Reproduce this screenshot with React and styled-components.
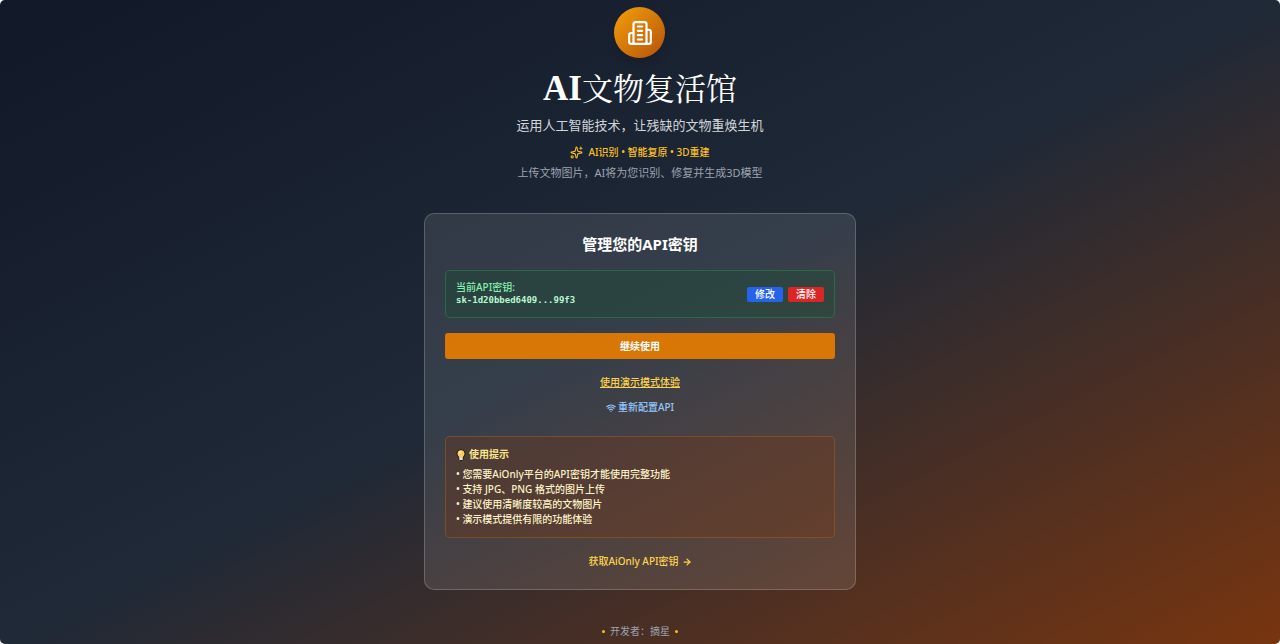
import React from "react";
import styled, { createGlobalStyle } from "styled-components";
import { ArrowRight, Sparkles, Wifi } from "lucide-react";

const tips = [
  "您需要AiOnly平台的API密钥才能使用完整功能",
  "支持 JPG、PNG 格式的图片上传",
  "建议使用清晰度较高的文物图片",
  "演示模式提供有限的功能体验",
];

const MuseumIcon = () => (
  <svg
    width="26"
    height="26"
    viewBox="0 0 24 24"
    fill="none"
    stroke="currentColor"
    strokeWidth="2"
    strokeLinecap="round"
    strokeLinejoin="round"
    aria-hidden="true"
  >
    <path d="M6 22V4a2 2 0 0 1 2-2h8a2 2 0 0 1 2 2v18Z" />
    <path d="M6 12H4a2 2 0 0 0-2 2v6a2 2 0 0 0 2 2h2" />
    <path d="M18 9h2a2 2 0 0 1 2 2v9a2 2 0 0 1-2 2h-2" />
    <path d="M10 6h4M10 10h4M10 14h4M10 18h4" />
  </svg>
);

const BulbIcon = () => (
  <svg width="10" height="12" viewBox="0 0 20 24" aria-hidden="true">
    <path
      d="M10 1a8 8 0 0 0-8 8c0 4 3 6 4 9v3l2 2h4l2-2v-3c1-3 4-5 4-9a8 8 0 0 0-8-8Z"
      fill="#fcc95c"
      stroke="#1c1917"
      strokeWidth="2"
    />
    <path d="M7 17h6v4l-1 1H8l-1-1Z" fill="#e7e5e4" />
    <circle cx="8" cy="7" r="3" fill="#fde6a8" />
  </svg>
);

const App = () => {
  return (
    <Page>
      <GlobalStyle />
      <Header>
        <Logo>
          <MuseumIcon />
        </Logo>
        <Title>
          <TitleLatin>AI</TitleLatin>文物复活馆
        </Title>
        <Subtitle>运用人工智能技术，让残缺的文物重焕生机</Subtitle>
        <Features>
          <Sparkles size={13} />
          <span>AI识别 • 智能复原 • 3D重建</span>
        </Features>
        <Description>上传文物图片，AI将为您识别、修复并生成3D模型</Description>
      </Header>

      <Card>
        <CardTitle>管理您的API密钥</CardTitle>
        <KeyBox>
          <div>
            <KeyLabel>当前API密钥:</KeyLabel>
            <KeyValue>sk-1d20bbed6409...99f3</KeyValue>
          </div>
          <KeyActions>
            <SmallButton type="button" $color="#2563eb">
              修改
            </SmallButton>
            <SmallButton type="button" $color="#dc2626">
              清除
            </SmallButton>
          </KeyActions>
        </KeyBox>
        <MainButton type="button">继续使用</MainButton>
        <Options>
          <TextButton type="button" $color="#fcd34d" $underline>
            使用演示模式体验
          </TextButton>
          <TextButton type="button" $color="#93c5fd">
            <Wifi size={10} strokeWidth={3} />
            重新配置API
          </TextButton>
        </Options>
        <Tips>
          <TipsTitle>
            <BulbIcon />
            使用提示
          </TipsTitle>
          <TipList>
            {tips.map((tip) => (
              <li key={tip}>• {tip}</li>
            ))}
          </TipList>
        </Tips>
        <KeyLink href="#">
          获取AiOnly API密钥
          <ArrowRight size={10} strokeWidth={3} />
        </KeyLink>
      </Card>

      <Footer>
        <Dot />
        <span>开发者：摘星</span>
        <Dot />
      </Footer>
    </Page>
  );
};

export default App;

const GlobalStyle = createGlobalStyle`
  * {
    box-sizing: border-box;
  }
  body {
    margin: 0;
    background: #ffffff;
  }
  h1, h2, h3, p, ul {
    margin: 0;
    padding: 0;
  }
  button {
    font-family: inherit;
    cursor: pointer;
  }
  svg {
    flex-shrink: 0;
  }
`;

const Page = styled.div`
  min-height: 100vh;
  display: flex;
  flex-direction: column;
  align-items: center;
  padding: 7px 16px 5px;
  border-radius: 5px;
  background: linear-gradient(to bottom right, #111827, #1f2937, #78350f);
  color: #ffffff;
  font-family: "Noto Sans", "Noto Sans CJK SC", sans-serif;
  font-size: 10px;
  font-weight: 500;
  line-height: 15px;
`;
const Header = styled.header`
  display: flex;
  flex-direction: column;
  align-items: center;
  text-align: center;
`;
const Logo = styled.div`
  width: 51px;
  height: 51px;
  display: flex;
  align-items: center;
  justify-content: center;
  border-radius: 50%;
  background: linear-gradient(to bottom right, #f59e0b, #b45309);
  box-shadow: 0 6px 10px rgba(0, 0, 0, 0.1);
`;
const Title = styled.h1`
  margin-top: 11px;
  font-family: "Liberation Serif", "Noto Serif CJK SC", "Noto Sans CJK SC", serif;
  font-size: 31px;
  font-weight: 400;
  line-height: 40px;
`;
const TitleLatin = styled.span`
  font-size: 35px;
  font-weight: 700;
`;
const Subtitle = styled.p`
  margin-top: 5px;
  color: #d1d5db;
  font-size: 13px;
  font-weight: 400;
  line-height: 20px;
`;
const Features = styled.div`
  display: flex;
  align-items: center;
  gap: 5px;
  margin-top: 10px;
  color: #fbbf24;
`;
const Description = styled.p`
  margin-top: 4px;
  color: #9ca3af;
  font-size: 11px;
  font-weight: 400;
  line-height: 18px;
`;
const Card = styled.main`
  width: 100%;
  max-width: 432px;
  display: flex;
  flex-direction: column;
  margin-top: 31px;
  padding: 20px;
  border: 1px solid rgba(255, 255, 255, 0.2);
  border-radius: 10px;
  background: rgba(255, 255, 255, 0.1);
`;
const CardTitle = styled.h2`
  font-size: 15px;
  line-height: 20px;
  text-align: center;
`;
const KeyBox = styled.div`
  display: flex;
  align-items: center;
  justify-content: space-between;
  margin-top: 16px;
  padding: 10px;
  border: 1px solid rgba(34, 197, 94, 0.3);
  border-radius: 5px;
  background: rgba(20, 83, 45, 0.3);
`;
const KeyLabel = styled.p`
  color: #86efac;
  line-height: 13px;
`;
const KeyValue = styled.p`
  color: #bbf7d0;
  font-family: "DejaVu Sans Mono", monospace;
  font-size: 9px;
  font-weight: 700;
  line-height: 13px;
`;
const KeyActions = styled.div`
  display: flex;
  gap: 5px;
`;
const SmallButton = styled.button`
  padding: 0 8px;
  border: 0;
  border-radius: 2px;
  background: ${({ $color }) => $color};
  color: #ffffff;
  font-size: 10px;
  font-weight: 500;
  line-height: 15px;
`;
const MainButton = styled.button`
  margin-top: 15px;
  padding: 5px;
  border: 0;
  border-radius: 3px;
  background: #d97706;
  color: #ffffff;
  font-size: 10px;
  font-weight: 700;
  line-height: 16px;
`;
const Options = styled.div`
  display: flex;
  flex-direction: column;
  align-items: center;
  gap: 10px;
  margin-top: 16px;
`;
const TextButton = styled.button`
  display: flex;
  align-items: center;
  gap: 2px;
  padding: 0;
  border: 0;
  background: none;
  color: ${({ $color }) => $color};
  font-size: 10px;
  font-weight: 500;
  line-height: 15px;
  text-decoration: ${({ $underline }) => ($underline ? "underline" : "none")};
`;
const Tips = styled.section`
  margin-top: 21px;
  padding: 10px;
  border: 1px solid rgba(217, 119, 6, 0.3);
  border-radius: 5px;
  background: rgba(120, 53, 15, 0.3);
`;
const TipsTitle = styled.h3`
  display: flex;
  align-items: center;
  gap: 3px;
  color: #fde68a;
  font-size: 10px;
  line-height: 15px;
`;
const TipList = styled.ul`
  margin-top: 5px;
  color: #fef3c7;
  list-style: none;
`;
const KeyLink = styled.a`
  display: flex;
  align-items: center;
  align-self: center;
  gap: 3px;
  margin-top: 16px;
  color: #fcd34d;
  text-decoration: none;
`;
const Footer = styled.footer`
  display: flex;
  align-items: center;
  gap: 5px;
  margin-top: auto;
  color: #9ca3af;
  font-weight: 400;
`;
const Dot = styled.i`
  width: 3px;
  height: 3px;
  border-radius: 50%;
  background: #fbbf24;
`;
